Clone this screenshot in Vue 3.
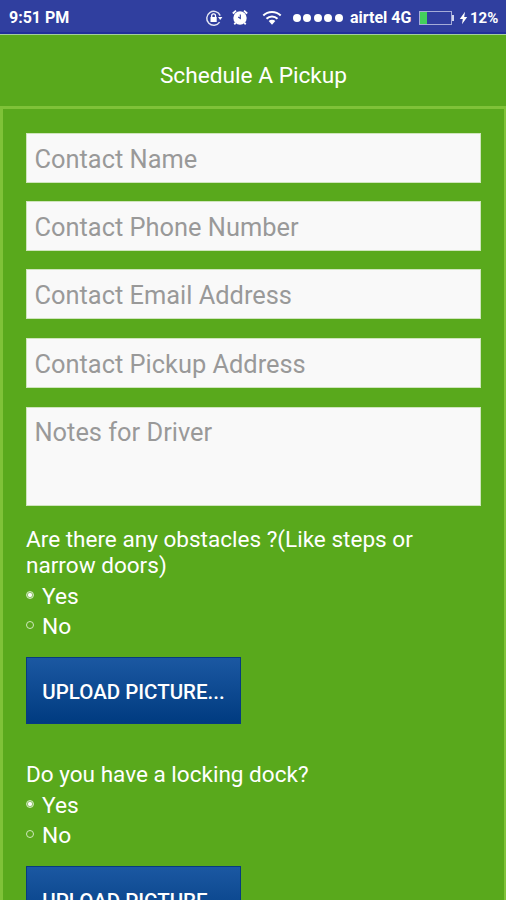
<script setup>
import { ref } from 'vue'

const fields = ['Contact Name', 'Contact Phone Number', 'Contact Email Address', 'Contact Pickup Address']
const questions = ref([
  { id: 'obstacles', lines: ['Are there any obstacles ?(Like steps or', 'narrow doors)'], answer: 'Yes' },
  { id: 'dock', lines: ['Do you have a locking dock?'], answer: 'Yes' },
])
</script>

<template>
  <div class="screen">
    <div class="status">
      <span class="time">9:51 PM</span>
      <svg class="lock" width="18" height="18" viewBox="0 0 18 18" fill="none" stroke="#fff">
        <path d="M15.2 6.6A7 7 0 1 0 14.6 13.2" stroke-width="1.5" opacity=".85" />
        <path d="M13 8h4.4l-2.2 3z" fill="#fff" stroke="none" />
        <rect x="5.5" y="8" width="6.2" height="5" fill="#fff" stroke="none" />
        <path d="M6.7 8.2V6.8a1.9 1.9 0 0 1 3.8 0v1.4" stroke-width="1.3" />
      </svg>
      <svg class="alarm" width="18" height="17" viewBox="0 0 18 17" fill="none">
        <circle cx="9" cy="9" r="6.7" fill="#fff" />
        <path d="M1.8 4.5 5 1.6M13 1.6l3.2 2.9M4.6 13.8l-1.3 1.6M13.4 13.8l1.3 1.6" stroke="#fff" stroke-width="1.8" />
        <path d="M9.3 5.6v3.8L7.2 8" stroke="#303f9f" stroke-width="1.1" />
      </svg>
      <svg class="wifi" width="20" height="16" viewBox="0 0 20 16" fill="none" stroke="#fff" stroke-width="2">
        <path d="M1.3 5.5a12.4 12.4 0 0 1 17.4 0M4.5 8.8a7.8 7.8 0 0 1 11 0" />
        <path d="M6.7 11a4.7 4.7 0 0 1 6.6 0L10 14.8z" fill="#fff" stroke="none" />
      </svg>
      <span class="dots"><i v-for="n in 5" :key="n"></i></span>
      <span class="carrier">airtel 4G</span>
      <span class="battery"><i></i></span>
      <svg class="bolt" width="9" height="14" viewBox="0 0 9 14"><path d="M6 .8.8 8h3L3 13.2 8.2 6h-3z" fill="#fff" /></svg>
      <span class="percent">12%</span>
    </div>
    <header class="header"><h1>Schedule A Pickup</h1></header>
    <main class="form">
      <input v-for="f in fields" :key="f" class="field" type="text" :placeholder="f" />
      <textarea class="field notes" placeholder="Notes for Driver"></textarea>
      <section v-for="q in questions" :key="q.id" class="question">
        <p class="prompt"><span v-for="l in q.lines" :key="l">{{ l }}</span></p>
        <label v-for="o in ['Yes', 'No']" :key="o" class="option">
          <input v-model="q.answer" class="radio" type="radio" :name="q.id" :value="o" />
          <span>{{ o }}</span>
        </label>
        <button class="upload" type="button">UPLOAD PICTURE...</button>
      </section>
    </main>
  </div>
</template>

<style>
body { overflow: hidden; }
</style>

<style scoped>
* { box-sizing: border-box; }
.screen { width: 506px; height: 900px; overflow: hidden; display: flex; flex-direction: column; background: #59a91c; color: #fff; font-family: Roboto, sans-serif; }
.status { flex: none; height: 36px; padding: 0 0 1px 9px; display: flex; align-items: center; background: linear-gradient(#303f9f 32px, #20319a 32px, #20319a 34px, #a3cf9c 34px, #a3cf9c 35px, #59a91c 35px); font-size: 16px; font-weight: 700; white-space: nowrap; }
.status svg, .status span { flex: none; }
.time { width: 196px; }
.lock { margin-right: 8px; }
.alarm { margin-right: 13px; }
.wifi { margin-right: 11px; }
.dots { display: flex; gap: 2.4px; width: 57px; }
.dots i { width: 8px; height: 8px; border-radius: 50%; background: #fff; }
.carrier { width: 69px; }
.battery { position: relative; width: 33px; height: 14px; border: 1px solid #a5acd8; padding: 0; margin-right: 7px; }
.battery i { display: block; width: 7px; height: 100%; background: #43d05c; }
.battery::after { content: ''; position: absolute; right: -3px; top: 3px; width: 2px; height: 6px; background: #d0d4ee; }
.bolt { margin-right: 2px; }
.percent { font-size: 15px; }
.header { flex: none; height: 70px; display: flex; align-items: center; justify-content: center; padding: 9px 0 0 1px; }
h1 { margin: 0; font-size: 22.7px; line-height: 28px; font-weight: 400; }
.form { flex: none; height: 830px; border: solid #7fc238; border-width: 3px 2px 0 3px; padding: 24px 23px 0; display: flex; flex-direction: column; }
.field { flex: none; display: block; width: 455px; height: 50px; margin: 0 0 18.2px; padding: 2px 7.5px 0; border: 1px solid #cfe5bd; border-radius: 0; outline: none; background: #f9f9f9; font: 400 25.4px/30px Roboto, sans-serif; color: #555; }
.field::placeholder { color: #999; opacity: 1; }
.notes { height: 99px; padding-top: 9px; resize: none; overflow: hidden; margin: .8px 0 21px; }
.question { flex: none; margin-bottom: 38px; display: flex; flex-direction: column; align-items: flex-start; }
.prompt { margin: 0 0 3px; font-size: 22.55px; line-height: 26px; white-space: nowrap; }
.prompt span { display: block; }
.option { display: flex; align-items: center; height: 30px; font-size: 22.7px; line-height: 30px; }
.radio { appearance: none; flex: none; width: 8px; height: 8px; margin: -3px 8px 0 0; border: 1px solid #cfe8bd; border-radius: 50%; }
.radio:checked { background: radial-gradient(circle, #fff 1.5px, #8bc263 2.5px); }
.upload { width: 215px; height: 67px; margin: 15px 0 0; padding: 3px 0 0; border: 1px solid #073b80; background: linear-gradient(#1b58a2, #003b80); color: #fff; font: 500 20.5px/24px Roboto, sans-serif; white-space: nowrap; }
</style>
